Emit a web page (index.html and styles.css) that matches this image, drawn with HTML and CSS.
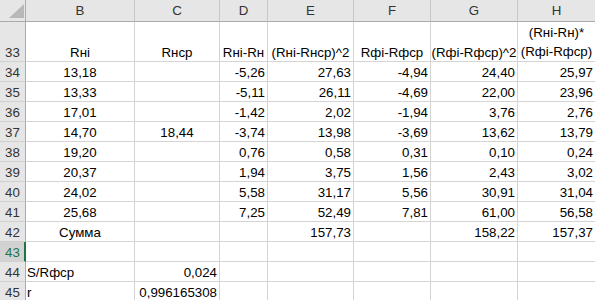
FILE: index.html
```html
<!DOCTYPE html>
<html>
<head>
<meta charset="utf-8">
<link rel="stylesheet" href="styles.css">
</head>
<body>
<div class="sheet">
  <div class="hdr corner"><svg class="tri" width="15" height="14" viewBox="0 0 15 14"><polygon points="15,0 15,14 0,14" fill="#b8b8b8"/></svg></div>
  <div class="hdr">B</div><div class="hdr">C</div><div class="hdr">D</div><div class="hdr">E</div><div class="hdr">F</div><div class="hdr">G</div><div class="hdr last">H</div>

  <div class="rh">33</div>
  <div class="cell c">Rнi</div><div class="cell c">Rнср</div><div class="cell c">Rнi-Rн</div><div class="cell c">(Rнi-Rнср)^2</div><div class="cell c">Rфi-Rфср</div><div class="cell c">(Rфi-Rфср)^2</div><div class="cell c two">(Rнi-Rн)*<br>(Rфi-Rфср)</div>

  <div class="rh">34</div>
  <div class="cell c">13,18</div><div class="cell"></div><div class="cell r">-5,26</div><div class="cell r">27,63</div><div class="cell r">-4,94</div><div class="cell r">24,40</div><div class="cell r">25,97</div>

  <div class="rh">35</div>
  <div class="cell c">13,33</div><div class="cell"></div><div class="cell r">-5,11</div><div class="cell r">26,11</div><div class="cell r">-4,69</div><div class="cell r">22,00</div><div class="cell r">23,96</div>

  <div class="rh">36</div>
  <div class="cell c">17,01</div><div class="cell"></div><div class="cell r">-1,42</div><div class="cell r">2,02</div><div class="cell r">-1,94</div><div class="cell r">3,76</div><div class="cell r">2,76</div>

  <div class="rh">37</div>
  <div class="cell c">14,70</div><div class="cell c">18,44</div><div class="cell r">-3,74</div><div class="cell r">13,98</div><div class="cell r">-3,69</div><div class="cell r">13,62</div><div class="cell r">13,79</div>

  <div class="rh">38</div>
  <div class="cell c">19,20</div><div class="cell"></div><div class="cell r">0,76</div><div class="cell r">0,58</div><div class="cell r">0,31</div><div class="cell r">0,10</div><div class="cell r">0,24</div>

  <div class="rh">39</div>
  <div class="cell c">20,37</div><div class="cell"></div><div class="cell r">1,94</div><div class="cell r">3,75</div><div class="cell r">1,56</div><div class="cell r">2,43</div><div class="cell r">3,02</div>

  <div class="rh">40</div>
  <div class="cell c">24,02</div><div class="cell"></div><div class="cell r">5,58</div><div class="cell r">31,17</div><div class="cell r">5,56</div><div class="cell r">30,91</div><div class="cell r">31,04</div>

  <div class="rh">41</div>
  <div class="cell c">25,68</div><div class="cell"></div><div class="cell r">7,25</div><div class="cell r">52,49</div><div class="cell r">7,81</div><div class="cell r">61,00</div><div class="cell r">56,58</div>

  <div class="rh">42</div>
  <div class="cell c">Сумма</div><div class="cell"></div><div class="cell"></div><div class="cell r">157,73</div><div class="cell"></div><div class="cell r">158,22</div><div class="cell r">157,37</div>

  <div class="rh sel">43</div>
  <div class="cell"></div><div class="cell"></div><div class="cell"></div><div class="cell"></div><div class="cell"></div><div class="cell"></div><div class="cell"></div>

  <div class="rh">44</div>
  <div class="cell l">S/Rфср</div><div class="cell r">0,024</div><div class="cell"></div><div class="cell"></div><div class="cell"></div><div class="cell"></div><div class="cell"></div>

  <div class="rh">45</div>
  <div class="cell l">r</div><div class="cell r">0,996165308</div><div class="cell"></div><div class="cell"></div><div class="cell"></div><div class="cell"></div><div class="cell"></div>
</div>
</body>
</html>
```

FILE: styles.css
```css
html, body {
  margin: 0;
  padding: 0;
  background: #ffffff;
  overflow: hidden;
}
.sheet {
  display: grid;
  grid-template-columns: 26px 109px 85px 48px 86px 77px 87px 78px;
  grid-template-rows: 22px 40px repeat(12, 20px);
  font-family: "Liberation Sans", Arial, sans-serif;
  font-size: 13.3px;
  line-height: 16px;
  color: #000;
  width: 596px;
}
.hdr {
  box-sizing: border-box;
  background: #e6e6e6;
  border-right: 1px solid #c8c8c8;
  border-bottom: 1px solid #ababab;
  display: flex;
  align-items: center;
  justify-content: center;
  color: #333;
  font-size: 13.3px;
  padding-top: 1px;
}
.corner {
  border-right: 1px solid #ababab;
  position: relative;
}
.tri {
  position: absolute;
  right: 1px;
  bottom: 3px;
}
.rh {
  box-sizing: border-box;
  background: #e6e6e6;
  border-right: 1px solid #ababab;
  border-bottom: 1px solid #d0d0d0;
  display: flex;
  align-items: flex-end;
  justify-content: center;
  color: #333;
  padding-bottom: 0px;
}
.rh.sel {
  background: #d2d2d2;
  color: #217346;
  border-right: 2px solid #217346;
  padding-left: 1px;
}
.cell {
  box-sizing: border-box;
  border-right: 1px solid #d4d4d4;
  border-bottom: 1px solid #d4d4d4;
  display: flex;
  align-items: flex-end;
  white-space: nowrap;
  padding: 0 2px 0 2px;
  overflow: visible;
}
.c { justify-content: center; }
.r { justify-content: flex-end; }
.l { justify-content: flex-start; padding-left: 1px; }
.two {
  flex-direction: column;
  align-items: center;
  justify-content: flex-end;
  line-height: 19px;
  text-align: center;
}
```
